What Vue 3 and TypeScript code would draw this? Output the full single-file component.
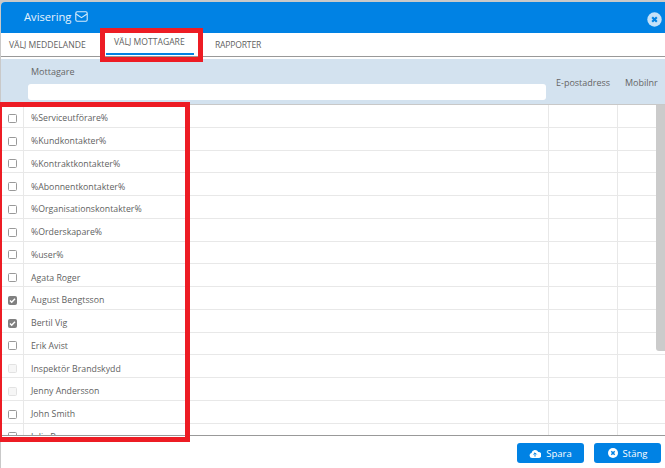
<script setup lang="ts">
interface Row { name: string; state: 'off' | 'on' | 'disabled' }
const rows: Row[] = [
  { name: '%Serviceutförare%', state: 'off' },
  { name: '%Kundkontakter%', state: 'off' },
  { name: '%Kontraktkontakter%', state: 'off' },
  { name: '%Abonnentkontakter%', state: 'off' },
  { name: '%Organisationskontakter%', state: 'off' },
  { name: '%Orderskapare%', state: 'off' },
  { name: '%user%', state: 'off' },
  { name: 'Agata Roger', state: 'off' },
  { name: 'August Bengtsson', state: 'on' },
  { name: 'Bertil Vig', state: 'on' },
  { name: 'Erik Avist', state: 'off' },
  { name: 'Inspektör Brandskydd', state: 'disabled' },
  { name: 'Jenny Andersson', state: 'disabled' },
  { name: 'John Smith', state: 'off' },
  { name: 'Julia Berg', state: 'off' },
]
const tabs = ['VÄLJ MEDDELANDE', 'VÄLJ MOTTAGARE', 'RAPPORTER']
</script>

<template>
  <div class="page">
    <div class="modal">
      <header class="head">
        <span class="title">Avisering</span>
        <svg class="mail" width="13" height="11" viewBox="0 0 13 11" fill="none" stroke="#d8ecfb" stroke-width="1.1">
          <rect x="0.8" y="0.8" width="11.4" height="9.4" rx="1.4" />
          <path d="M1 3l5.5 3.6L12 3" />
        </svg>
        <svg class="close" width="15" height="15" viewBox="0 0 15 15">
          <circle cx="7.5" cy="7.5" r="7.2" fill="#c4e1f8" />
          <path d="M5.2 5.2l4.6 4.6M9.8 5.2l-4.6 4.6" stroke="#0082e4" stroke-width="2.1" />
        </svg>
      </header>
      <nav class="tabs">
        <span v-for="(t, i) in tabs" :key="t" class="tab" :class="{ active: i === 1 }">{{ t }}</span>
      </nav>
      <div class="thead">
        <div class="th-main">
          <span>Mottagare</span>
          <div class="search"></div>
        </div>
        <div class="th-side th-mail">E-postadress</div>
        <div class="th-side">Mobilnr</div>
      </div>
      <div class="tbody">
        <div v-for="r in rows" :key="r.name" class="row">
          <div class="cell-check">
            <span class="box" :class="r.state">
              <svg v-if="r.state === 'on'" width="7" height="7" viewBox="0 0 7 7" fill="none" stroke="#fff" stroke-width="1.4">
                <path d="M1 3.6l1.7 1.7L6 1.8" />
              </svg>
            </span>
          </div>
          <div class="cell-name">{{ r.name }}</div>
          <div class="cell-mail"></div>
          <div class="cell-mob"></div>
        </div>
      </div>
      <footer class="foot">
        <button class="btn" type="button">
          <svg width="12" height="9" viewBox="0 0 12 9">
            <path d="M3 9a2.6 2.6 0 0 1-.5-5.1A3.6 3.6 0 0 1 9.3 3 3 3 0 0 1 9.4 9z" fill="#fff" />
            <path d="M6 7.6V4M4.4 5.4L6 3.8l1.6 1.6" stroke="#0082e4" stroke-width="1" fill="none" />
          </svg>
          Spara
        </button>
        <button class="btn" type="button">
          <svg width="10" height="10" viewBox="0 0 10 10">
            <circle cx="5" cy="5" r="5" fill="#fff" />
            <path d="M3.3 3.3l3.4 3.4M6.7 3.3L3.3 6.7" stroke="#0082e4" stroke-width="1.5" />
          </svg>
          Stäng
        </button>
      </footer>
    </div>
    <div class="mark mark-tab"></div>
    <div class="mark mark-list"></div>
    <div class="scrollbar"></div>
  </div>
</template>

<style>
html, body { margin: 0; background: #fff; }
</style>

<style scoped>
.page {
  position: relative;
  width: 665px;
  height: 468px;
  overflow: hidden;
  background: #c9c9c9;
  padding-top: 2px;
  box-sizing: border-box;
  font-family: "Open Sans", sans-serif;
  color: #5f5f5f;
}
.modal {
  margin-left: 1px;
  height: 466px;
  background: #fff;
  border-radius: 4px 0 0 0;
  display: flex;
  flex-direction: column;
  overflow: hidden;
}
.head {
  height: 31px;
  flex: none;
  box-sizing: border-box;
  background: #0082e4;
  display: flex;
  align-items: center;
  padding: 0 3px 3px 23px;
  color: #e6f3fd;
  font-size: 11.2px;
  gap: 4px;
}
.close { margin-left: auto; margin-top: 7px; }
.tabs {
  height: 24px;
  flex: none;
  box-sizing: border-box;
  display: flex;
  border-bottom: 1px solid #999;
  font-size: 8.6px;
  line-height: 12px;
  color: #5f5f5f;
}
.tab {
  padding: 6px 0 0 8px;
  width: 105px;
  box-sizing: border-box;
  white-space: nowrap;
}
.tab.active {
  width: 88px;
  margin-right: 21px;
  padding: 3px 0 0 8px;
  height: 22px;
  border-bottom: 2px solid #0082e4;
}
.tab:last-child { width: auto; padding-left: 0; letter-spacing: -0.2px; }
.thead {
  margin-top: 2px;
  height: 46px;
  flex: none;
  background: #d3e2ef;
  border-bottom: 1px solid #c8c8c8;
  box-sizing: border-box;
  display: flex;
  font-size: 9px;
  line-height: 12px;
  color: #666;
}
.th-main {
  width: 547px;
  padding: 7px 0 0 30px;
  box-sizing: border-box;
  display: flex;
  flex-direction: column;
  gap: 6px;
}
.search {
  width: 518px;
  margin-left: -3px;
  height: 16px;
  background: #fff;
  border-radius: 3px;
}
.th-side { padding: 18px 0 0 8px; box-sizing: border-box; }
.th-mail { width: 69px; }
.tbody {
  height: 331px;
  flex: none;
  overflow: hidden;
  border-bottom: 1px solid #999;
  box-sizing: border-box;
}
.row {
  height: 22.75px;
  box-sizing: border-box;
  display: grid;
  grid-template-columns: 23px 525px 69px 1fr;
  border-bottom: 1px solid #e8e8e8;
  font-size: 8.75px;
  color: #5f5f5f;
}
.row > div { display: flex; align-items: center; padding-top: 5px; box-sizing: border-box; }
.cell-check { border-right: 1px solid #e8e8e8; padding-left: 7px; }
.cell-name { padding-left: 7px; border-right: 1px solid #e8e8e8; white-space: nowrap; }
.cell-mail { border-right: 1px solid #e8e8e8; }
.box {
  width: 9px;
  height: 9px;
  border: 1px solid #999;
  border-radius: 1.5px;
  background: #fff;
  display: flex;
  align-items: center;
  justify-content: center;
  box-sizing: border-box;
}
.box.on { background: #808080; border-color: #808080; }
.box.disabled { border-color: #e2e2e2; background: #f6f6f6; }
.foot {
  flex: 1;
  display: flex;
  justify-content: flex-end;
  align-items: flex-start;
  gap: 10px;
  padding: 7px 4px 0 0;
}
.btn {
  width: 67px;
  height: 20px;
  border: 0;
  border-radius: 3px;
  background: #0082e4;
  color: #fff;
  font: 9.5px "Open Sans", sans-serif;
  display: flex;
  align-items: center;
  justify-content: center;
  gap: 5px;
  padding: 0;
}
.mark {
  position: absolute;
  border-style: solid;
  border-color: #ed1c24;
  box-sizing: border-box;
}
.mark-tab { left: 100px; top: 28px; width: 103px; height: 34px; border-width: 5px; }
.mark-list { left: 0; top: 102px; width: 190px; height: 340px; border-width: 5px 5px 5px 2px; }
.scrollbar {
  position: absolute;
  left: 656px;
  top: 105px;
  width: 9px;
  height: 246px;
  background: #cbcbcb;
  border-radius: 0 0 0 3px;
}
</style>
